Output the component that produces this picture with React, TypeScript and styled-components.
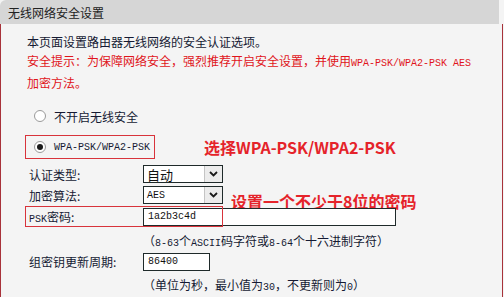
import styled, { createGlobalStyle } from 'styled-components';

const GlobalStyle = createGlobalStyle`
    html, body {
        margin: 0;
        padding: 0;
        background: #f4f4f4;
    }
    body {
        font-family: "Noto Sans CJK SC", "Liberation Sans", sans-serif;
        color: #151a33;
    }
`;

export default function App() {
  return (
    <>
      <GlobalStyle />
      <Panel>
        <Header>无线网络安全设置</Header>
        <Body>
          <Intro>
            <p>本页面设置路由器无线网络的安全认证选项。</p>
            <p className="warn">
              安全提示：为保障网络安全，强烈推荐开启安全设置，并使用<Mono>WPA-PSK/WPA2-PSK AES</Mono>
            </p>
            <p className="warn">加密方法。</p>
          </Intro>

          <Row $mt={14} $h={20}>
            <RadioOption>
              <Radio />
              <span>不开启无线安全</span>
            </RadioOption>
          </Row>

          <Row $mt={9} $h={24}>
            <RadioOption $boxed>
              <Radio $checked />
              <Mono>WPA-PSK/WPA2-PSK</Mono>
            </RadioOption>
            <Note $ml={49}>选择WPA-PSK/WPA2-PSK</Note>
          </Row>

          <Row $mt={5} $h={20}>
            <Label>认证类型:</Label>
            <Select>
              <span>自动</span>
              <DropButton><Chevron /></DropButton>
            </Select>
          </Row>

          <Row $mt={1} $h={20}>
            <Label>加密算法:</Label>
            <Select>
              <Mono>AES</Mono>
              <DropButton><Chevron /></DropButton>
            </Select>
            <Note $ml={8} $dy={6}>设置一个不少于8位的密码</Note>
          </Row>

          <Row $mt={1} $h={21}>
            <Highlight />
            <Label><Mono>PSK</Mono>密码:</Label>
            <TextInput $w={253}>1a2b3c4d</TextInput>
          </Row>

          <Hint $mt={4}>
            （<Mono>8-63</Mono>个<Mono>ASCII</Mono>码字符或<Mono>8-64</Mono>个十六进制字符）
          </Hint>

          <Row $mt={2} $h={19}>
            <Label>组密钥更新周期:</Label>
            <TextInput $w={67}>86400</TextInput>
          </Row>

          <Hint $mt={4}>
            （单位为秒，最小值为<Mono>30</Mono>，不更新则为<Mono>0</Mono>）
          </Hint>
        </Body>
      </Panel>
    </>
  )
};

function Chevron() {
  return (
    <svg width="9" height="6" viewBox="0 0 9 6">
      <path d="M1 1 L4.5 4.5 L8 1" fill="none" stroke="#1a1a1a" strokeWidth="1.8" />
    </svg>
  );
}

const Panel = styled.div`
    width: 503px;
    height: 297px;
    overflow: hidden;
    display: flex;
    flex-direction: column;
`;

const Header = styled.div`
    height: 24px;
    background: #d6d6d6;
    border-top-left-radius: 6px;
    padding-left: 8px;
    display: flex;
    align-items: center;
    font-size: 12px;
    color: #222;
    margin-right: 4px;
`;

const Body = styled.div`
    flex: 1;
    background: #f4f4f4;
    border-left: 1px solid #a8323a;
    border-right: 1px solid #a8323a;
    display: flex;
    flex-direction: column;
    font-size: 12px;
`;

const Intro = styled.div`
    margin-top: 8px;
    padding-left: 26px;
    line-height: 19px;

    p {
        margin: 0;
        white-space: nowrap;
    }

    .warn {
        color: #e0141b;
    }
`;

const Mono = styled.span`
    font-family: "Liberation Mono", "DejaVu Sans Mono", monospace;
    font-size: 10px;
`;

const Row = styled.div<{ $mt: number; $h: number }>`
    position: relative;
    margin-top: ${p => p.$mt}px;
    height: ${p => p.$h}px;
    display: flex;
    align-items: center;
    padding-left: 24px;
    white-space: nowrap;
`;

const RadioOption = styled.div<{ $boxed?: boolean }>`
    display: flex;
    align-items: center;
    gap: 8px;
    height: 100%;
    box-sizing: border-box;
    width: ${p => (p.$boxed ? '130px' : 'auto')};
    padding-left: 8px;
    border: 1px solid ${p => (p.$boxed ? '#d8333b' : 'transparent')};
`;

const Radio = styled.span<{ $checked?: boolean }>`
    width: 12px;
    height: 12px;
    box-sizing: border-box;
    border-radius: 50%;
    border: 1px solid #9a9a9a;
    background: #fff;
    display: flex;
    align-items: center;
    justify-content: center;

    &::after {
        content: '';
        width: 6px;
        height: 6px;
        border-radius: 50%;
        background: ${p => (p.$checked ? '#1a1a1a' : 'transparent')};
    }
`;

const Note = styled.span<{ $ml: number; $dy?: number }>`
    margin-left: ${p => p.$ml}px;
    position: relative;
    top: ${p => p.$dy || 0}px;
    color: #e5232a;
    font-size: 16px;
    font-weight: 700;
`;

const Label = styled.span`
    width: 114px;
    padding-left: 4px;
    flex-shrink: 0;
`;

const Select = styled.div`
    width: 80px;
    height: 18px;
    box-sizing: border-box;
    border: 1px solid #1f2a2a;
    background: #fff;
    display: flex;
    align-items: center;
    justify-content: space-between;
    padding-left: 3px;
    font-size: 13px;
    color: #111;
`;

const DropButton = styled.span`
    width: 18px;
    height: 100%;
    box-sizing: border-box;
    background: #ececec;
    border-left: 1px solid #c4c4c4;
    display: flex;
    align-items: center;
    justify-content: center;
`;

const TextInput = styled.div<{ $w: number }>`
    width: ${p => p.$w}px;
    height: 18px;
    box-sizing: border-box;
    border: 1px solid #1f2a2a;
    background: #fff;
    padding-left: 4px;
    display: flex;
    align-items: center;
    font-family: "Liberation Mono", "DejaVu Sans Mono", monospace;
    font-size: 10px;
    color: #111;
`;

const Highlight = styled.span`
    position: absolute;
    left: 24px;
    top: 0;
    width: 198px;
    height: 21px;
    box-sizing: border-box;
    border: 1px solid #d8333b;
    pointer-events: none;
`;

const Hint = styled.div<{ $mt: number }>`
    margin-top: ${p => p.$mt}px;
    height: 19px;
    line-height: 19px;
    padding-left: 142px;
    white-space: nowrap;
`;
